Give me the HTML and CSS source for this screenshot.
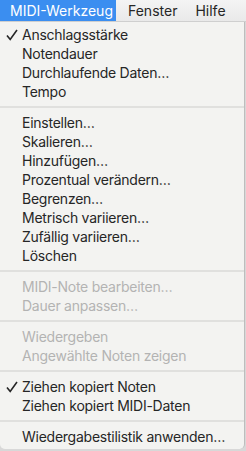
FILE: index.html
```html
<!DOCTYPE html>
<html lang="de">
<head>
    <meta charset="UTF-8">
    <title>MIDI-Werkzeug</title>
    <link rel="stylesheet" href="styles.css">
</head>
<body>
    <div class="menubar">
        <span class="title active">MIDI-Werkzeug</span>
        <span class="title fenster">Fenster</span>
        <span class="title">Hilfe</span>
    </div>
    <ul class="menu">
        <li class="item"><svg class="check" width="12" height="12" viewBox="0 0 12 12"><path d="M1 6.5 L4.2 10.5 L11 1" fill="none" stroke="#262626" stroke-width="1.6"/></svg>Anschlagsstärke</li>
        <li class="item">Notendauer</li>
        <li class="item">Durchlaufende Daten…</li>
        <li class="item">Tempo</li>
        <li class="sep"></li>
        <li class="item">Einstellen…</li>
        <li class="item">Skalieren…</li>
        <li class="item">Hinzufügen…</li>
        <li class="item">Prozentual verändern…</li>
        <li class="item">Begrenzen…</li>
        <li class="item">Metrisch variieren…</li>
        <li class="item">Zufällig variieren…</li>
        <li class="item">Löschen</li>
        <li class="sep"></li>
        <li class="item off">MIDI-Note bearbeiten…</li>
        <li class="item off">Dauer anpassen…</li>
        <li class="sep"></li>
        <li class="item off">Wiedergeben</li>
        <li class="item off">Angewählte Noten zeigen</li>
        <li class="sep"></li>
        <li class="item"><svg class="check" width="12" height="12" viewBox="0 0 12 12"><path d="M1 6.5 L4.2 10.5 L11 1" fill="none" stroke="#262626" stroke-width="1.6"/></svg>Ziehen kopiert Noten</li>
        <li class="item">Ziehen kopiert MIDI-Daten</li>
        <li class="sep"></li>
        <li class="item">Wiedergabestilistik anwenden…</li>
    </ul>
</body>
</html>
```

FILE: styles.css
```css
html {
    font-family: Inter, "Liberation Sans", sans-serif;
}

body {
    margin: 0;
    width: 246px;
    height: 451px;
    background: #d8d8d8;
    color: #262626;
    font-size: 14px;
    letter-spacing: -0.25px;
}

.menubar {
    display: flex;
    height: 22px;
    background: linear-gradient(#f4f4f4, #e9e9e9);
    border-bottom: 1px solid #cfcfcf;
    box-sizing: border-box;
    white-space: nowrap;
    letter-spacing: 0;
}

.title {
    padding: 0 9px;
    line-height: 21px;
}

.title.active {
    background: #3b8ef0;
    color: #fff;
    width: 116px;
    padding-left: 10px;
    box-sizing: border-box;
}

.title.fenster {
    padding-left: 12px;
}

.menu {
    list-style: none;
    margin: 0;
    padding: 3px 0;
    width: 245px;
    box-sizing: border-box;
    background: #f3f3f1;
    border-right: 1px solid #bdbdbd;
    border-radius: 0 0 5px 5px;
}

.item {
    position: relative;
    height: 19px;
    line-height: 19px;
    padding-left: 22px;
    white-space: nowrap;
}

.item.off {
    color: #b3b3b3;
}

.check {
    position: absolute;
    left: 6px;
    top: 4px;
}

.sep {
    height: 12px;
    display: flex;
    align-items: center;
}

.sep::before {
    content: "";
    display: block;
    width: 100%;
    height: 2px;
    background: #e0e0de;
}
```
